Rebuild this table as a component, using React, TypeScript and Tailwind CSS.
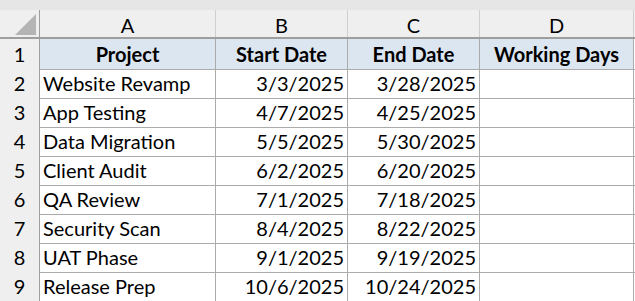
const rows = [
  ["Website Revamp", "3/3/2025", "3/28/2025"],
  ["App Testing", "4/7/2025", "4/25/2025"],
  ["Data Migration", "5/5/2025", "5/30/2025"],
  ["Client Audit", "6/2/2025", "6/20/2025"],
  ["QA Review", "7/1/2025", "7/18/2025"],
  ["Security Scan", "8/4/2025", "8/22/2025"],
  ["UAT Phase", "9/1/2025", "9/19/2025"],
  ["Release Prep", "10/6/2025", "10/24/2025"],
];

const cols = "grid grid-cols-[40px_176px_132px_132px_154px_1fr]";

export default function App() {
  return (
    <div className="h-[301px] w-[635px] overflow-hidden bg-white text-[20px] text-black font-['Lato','Liberation_Sans',sans-serif]">
      <div className="h-[10px] bg-[#e6e6e6]" />

      {/* column letters */}
      <div className={`${cols} h-[29px] border-b-2 border-[#9e9e9e] bg-[#efefef]`}>
        <div className="relative border-r border-[#9e9e9e]">
          <svg className="absolute left-[15px] top-[4px]" width="22" height="21" viewBox="0 0 22 21">
            <polygon points="21,0 21,21 0,21" fill="#b4b4b4" />
          </svg>
        </div>
        {["A", "B", "C", "D"].map((c) => (
          <div key={c} className="flex items-center justify-center border-r border-[#cfcfcf] pt-[3px] leading-none">
            {c}
          </div>
        ))}
        <div />
      </div>

      {/* header row */}
      <div className={`${cols} h-[29px]`}>
        <div className="flex items-center justify-center border-r border-b border-[#9e9e9e] bg-[#efefef]">1</div>
        {["Project", "Start Date", "End Date", "Working Days"].map((h) => (
          <div key={h} className="flex items-center justify-center border-r border-b border-[#ababab] bg-[#dce6f1] font-bold">
            {h}
          </div>
        ))}
        <div className="border-b border-[#ababab]" />
      </div>

      {rows.map((r, i) => (
        <div key={r[0]} className={`${cols} h-[29px]`}>
          <div className="flex items-center justify-center border-r border-b border-[#9e9e9e] bg-[#efefef]">{i + 2}</div>
          <div className="flex items-center border-r border-b border-[#ababab] pl-[3px]">{r[0]}</div>
          <div className="flex items-center justify-end border-r border-b border-[#ababab] pr-[3px]">{r[1]}</div>
          <div className="flex items-center justify-end border-r border-b border-[#ababab] pr-[3px]">{r[2]}</div>
          <div className="border-r border-b border-[#ababab]" />
          <div className="border-b border-[#ababab]" />
        </div>
      ))}
    </div>
  );
}
